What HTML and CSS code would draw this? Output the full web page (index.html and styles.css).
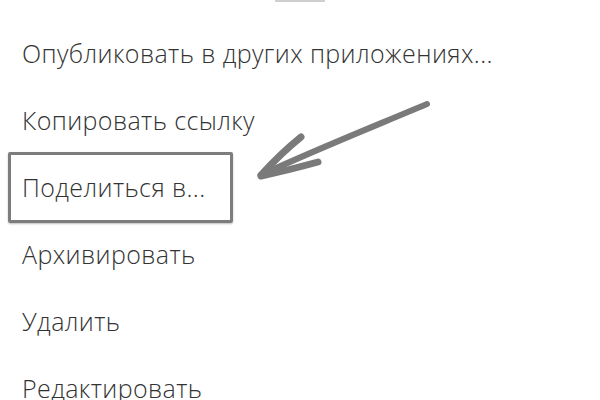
FILE: index.html
```html
<!DOCTYPE html>
<html lang="ru">
<head>
<meta charset="utf-8">
<link rel="stylesheet" href="styles.css">
</head>
<body>
<div class="screen">
  <div class="grip"></div>
  <ul class="menu">
    <li class="item">Опубликовать в других приложениях...</li>
    <li class="item">Копировать ссылку</li>
    <li class="item item-marked">Поделиться в...</li>
    <li class="item">Архивировать</li>
    <li class="item">Удалить</li>
    <li class="item">Редактировать</li>
  </ul>
  <svg class="arrow" width="600" height="400" viewBox="0 0 600 400">
    <g fill="none" stroke="#7a7a7a" stroke-linecap="round" stroke-linejoin="round">
      <path d="M427 104 C 370 128, 310 152, 261 175" stroke-width="6"/>
      <path d="M301 137 C 285 150, 272 163, 261 175" stroke-width="7"/>
      <path d="M318 162 C 300 167, 280 172, 261 176" stroke-width="7"/>
    </g>
  </svg>
</div>
</body>
</html>
```
FILE: styles.css
```css
html, body {
  margin: 0;
  padding: 0;
  background: #ffffff;
}
.screen {
  position: relative;
  width: 600px;
  height: 400px;
  overflow: hidden;
  font-family: "Open Sans", "Liberation Sans", sans-serif;
  font-weight: 300;
  color: #333333;
}
.grip {
  width: 50px;
  height: 2px;
  margin-left: 275px;
  background: #cfcfcf;
}
.menu {
  list-style: none;
  margin: 18px 0 0 0;
  padding: 0 0 0 8px;
  display: flex;
  flex-direction: column;
}
.item {
  height: 67px;
  line-height: 67px;
  font-size: 25px;
  letter-spacing: 0.4px;
  padding-left: 14px;
  white-space: nowrap;
}
.item-marked {
  box-sizing: border-box;
  width: 225px;
  height: 71px;
  line-height: 65px;
  margin: -2px 0;
  padding-left: 11px;
  border: 3px solid #7d7d7d;
  border-radius: 2px;
  box-shadow: 0 1px 2px rgba(0,0,0,0.25);
}
.arrow {
  position: absolute;
  left: 0;
  top: 0;
}
```
